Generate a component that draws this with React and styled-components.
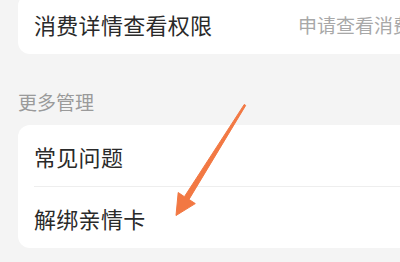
import React from 'react';
import styled, { createGlobalStyle } from 'styled-components';

const GlobalStyle = createGlobalStyle`
  html, body {
    margin: 0;
    padding: 0;
    background: #f4f4f4;
    overflow: hidden;
  }
  body {
    font-family: "Noto Sans CJK SC", "Noto Sans", sans-serif;
  }
`;

const Page = styled.div`
  position: relative;
  width: 400px;
  height: 262px;
  overflow: hidden;
  padding-left: 18px;
  box-sizing: border-box;
`;

const Card = styled.div`
  background: #fff;
  border-radius: 12px;
  margin-right: -30px;
  margin-top: ${p => p.$top || 0}px;
  display: flex;
  flex-direction: column;
`;

const Row = styled.div`
  height: ${p => p.$h || 61}px;
  display: flex;
  align-items: center;
  justify-content: space-between;
  padding-left: 16px;
  margin-right: 0;
  border-top: ${p => (p.$divider ? '1px solid #eeeeee' : 'none')};
  margin-left: ${p => (p.$divider ? 16 : 0)}px;
  padding-left: ${p => (p.$divider ? 0 : 16)}px;
  box-sizing: border-box;
  white-space: nowrap;
`;

const Title = styled.span`
  font-size: 22px;
  color: #2a2a2a;
  letter-spacing: 0.3px;
`;

const Hint = styled.span`
  font-size: 19px;
  color: #a8a8a8;
  flex-shrink: 0;
  width: 132px;
  overflow: hidden;
`;

const SectionLabel = styled.div`
  font-size: 19px;
  line-height: 24px;
  color: #9a9a9a;
  margin: 36px 0 11px;
`;

const Arrow = styled.svg`
  position: absolute;
  left: 0;
  top: 0;
  pointer-events: none;
`;

export default function App() {
  return (
    <Page>
      <GlobalStyle />
      <Card $top={-6}>
        <Row $h={60}>
          <Title>消费详情查看权限</Title>
          <Hint>申请查看消费</Hint>
        </Row>
      </Card>
      <SectionLabel>更多管理</SectionLabel>
      <Card>
        <Row $h={61}>
          <Title>常见问题</Title>
        </Row>
        <Row $h={62} $divider>
          <Title>解绑亲情卡</Title>
        </Row>
      </Card>
      <Arrow width="400" height="262" viewBox="0 0 400 262">
        <polygon
          points="244.3,104.4 245.7,105.4 189,199.4 195.3,203.6 176,215.5 178.2,192.5 184.4,196.7"
          fill="#f27843"
          stroke="#f27843"
          strokeWidth="1"
          strokeLinejoin="round"
        />
      </Arrow>
    </Page>
  );
}
